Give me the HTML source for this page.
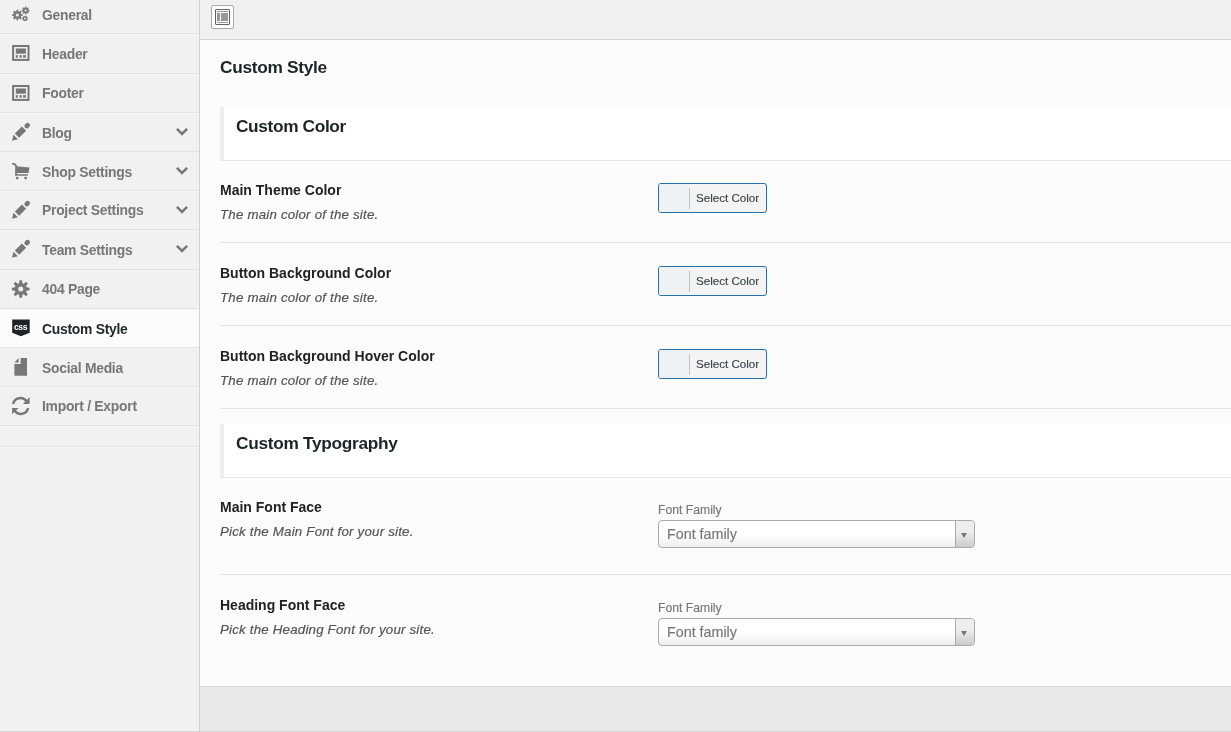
<!DOCTYPE html>
<html><head><meta charset="utf-8">
<style>
html,body{margin:0;padding:0;}
body{width:1231px;height:732px;overflow:hidden;position:relative;background:#efefef;font-family:"Liberation Sans",sans-serif;}
#wrap{position:absolute;left:0;top:0;width:1231px;height:732px;overflow:hidden;background:#efefef;will-change:transform;}
.t{position:absolute;white-space:nowrap;}
.ic{position:absolute;overflow:visible;}
#sb{position:absolute;left:0;top:0;width:199px;height:732px;background:#f1f1f1;}
.hl{position:absolute;left:0;width:199px;height:1px;background:#e2e2e2;border-bottom:1px solid #f5f5f5;}
#vl{position:absolute;left:199px;top:0;width:1px;height:732px;background:#d2d2d2;}
#hb{position:absolute;left:200px;top:0;width:1031px;height:38px;background:#f0f0f0;border-bottom:1px solid #f3f3f3;}
#hbl{position:absolute;left:200px;top:39px;width:1031px;height:1px;background:#d5d5d5;}
#hbtn{position:absolute;left:211px;top:5px;width:21px;height:22px;border:1px solid #a8a8a8;border-radius:2px;background:#fff;}
#hbi{position:absolute;left:3px;top:3px;width:13px;height:14px;border:1px solid #666;border-radius:1px;box-sizing:border-box;width:15px;height:16px;}
#hbi div{position:absolute;background:#999;}
#hbi .a{left:1px;top:1px;width:11px;height:1px;}
#hbi .b{left:1px;top:3px;width:3px;height:8px;}
#hbi .c{left:5px;top:3px;width:7px;height:8px;}
#hbi .d{left:1px;top:12px;width:11px;height:1px;}
#ct{position:absolute;left:200px;top:40px;width:1031px;height:646px;background:#fcfcfc;border-bottom:1px solid #dcdcdc;}
#ft{position:absolute;left:200px;top:687px;width:1031px;height:44px;background:#e9e9e9;}
.sec{position:absolute;left:220px;width:1007px;height:53px;background:#fff;border-left:4px solid #eeeeee;border-bottom:1px solid #e5e5e5;}
.rs{position:absolute;left:220px;width:1011px;height:1px;background:#e3e3e3;}
.cbtn{position:absolute;left:658px;width:107px;height:28px;border:1px solid #2271b1;border-radius:3px;background:#f4f4f4;}
.cbtn .sw{position:absolute;left:0;top:0;width:30px;height:28px;background:#f0f1f3;border-radius:2px 0 0 2px;}
.cbtn .sw:after{content:"";position:absolute;left:30px;top:4px;width:1px;height:21px;background:#c3c4c7;}
.sel{position:absolute;left:658px;width:315px;height:26px;border:1px solid #aaa;border-radius:4px;background:linear-gradient(to top,#eee 0%,#fff 50%);}
.arr{position:absolute;right:0;top:0;width:18px;height:26px;border-left:1px solid #aaa;border-radius:0 4px 4px 0;background:linear-gradient(to top,#ccc 0%,#eee 60%);}
.tri{position:absolute;left:5px;top:11.5px;width:0;height:0;border-left:3px solid transparent;border-right:3px solid transparent;border-top:5px solid #777;}
</style></head><body>
<div id="wrap">
<div id="sb"></div>
<div style="position:absolute;left:0;top:309px;width:199px;height:38px;background:#fcfcfc"></div>
<div class="hl" style="top:33px"></div>
<div class="hl" style="top:73px"></div>
<div class="hl" style="top:112px"></div>
<div class="hl" style="top:151px"></div>
<div class="hl" style="top:190px"></div>
<div class="hl" style="top:229px"></div>
<div class="hl" style="top:269px"></div>
<div class="hl" style="top:308px"></div>
<div class="hl" style="top:347px"></div>
<div class="hl" style="top:386px"></div>
<div class="hl" style="top:425px"></div>
<div class="hl" style="top:446px"></div>
<div class="t" style="left:42px;top:8.73px;font-size:13.9px;line-height:13.9px;color:#777;font-weight:bold;font-style:normal;letter-spacing:-0.27px;">General</div>

<div class="t" style="left:42px;top:47.73px;font-size:13.9px;line-height:13.9px;color:#777;font-weight:bold;font-style:normal;letter-spacing:-0.27px;">Header</div>

<div class="t" style="left:42px;top:86.73px;font-size:13.9px;line-height:13.9px;color:#777;font-weight:bold;font-style:normal;letter-spacing:-0.27px;">Footer</div>

<div class="t" style="left:42px;top:126.73px;font-size:13.9px;line-height:13.9px;color:#777;font-weight:bold;font-style:normal;letter-spacing:-0.27px;">Blog</div>

<div class="t" style="left:42px;top:165.73px;font-size:13.9px;line-height:13.9px;color:#777;font-weight:bold;font-style:normal;letter-spacing:-0.27px;">Shop Settings</div>

<div class="t" style="left:42px;top:203.73px;font-size:13.9px;line-height:13.9px;color:#777;font-weight:bold;font-style:normal;letter-spacing:-0.27px;">Project Settings</div>

<div class="t" style="left:42px;top:243.73px;font-size:13.9px;line-height:13.9px;color:#777;font-weight:bold;font-style:normal;letter-spacing:-0.27px;">Team Settings</div>

<div class="t" style="left:42px;top:282.73px;font-size:13.9px;line-height:13.9px;color:#777;font-weight:bold;font-style:normal;letter-spacing:-0.27px;">404 Page</div>

<div class="t" style="left:42px;top:322.73px;font-size:13.9px;line-height:13.9px;color:#23282d;font-weight:bold;font-style:normal;letter-spacing:-0.27px;">Custom Style</div>

<div class="t" style="left:42px;top:361.73px;font-size:13.9px;line-height:13.9px;color:#777;font-weight:bold;font-style:normal;letter-spacing:-0.27px;">Social Media</div>

<div class="t" style="left:42px;top:399.73px;font-size:13.9px;line-height:13.9px;color:#777;font-weight:bold;font-style:normal;letter-spacing:-0.27px;">Import / Export</div>

<svg class="ic" style="left:0;top:112px" width="199" height="40"><polyline points="176.9,16.9 182,22.0 187.1,16.9" fill="none" stroke="#777" stroke-width="2.5"/></svg>
<svg class="ic" style="left:0;top:151px" width="199" height="40"><polyline points="176.9,16.9 182,22.0 187.1,16.9" fill="none" stroke="#777" stroke-width="2.5"/></svg>
<svg class="ic" style="left:0;top:190px" width="199" height="40"><polyline points="176.9,16.9 182,22.0 187.1,16.9" fill="none" stroke="#777" stroke-width="2.5"/></svg>
<svg class="ic" style="left:0;top:229px" width="199" height="40"><polyline points="176.9,16.9 182,22.0 187.1,16.9" fill="none" stroke="#777" stroke-width="2.5"/></svg>
<svg class="ic" style="left:0;top:-6px" width="40" height="40"><circle cx="17.4" cy="21" r="3.8" fill="#777"/><rect x="16.50" y="15.70" width="1.8" height="5.30" fill="#777" transform="rotate(0.0 17.4 21)"/><rect x="16.50" y="15.70" width="1.8" height="5.30" fill="#777" transform="rotate(45.0 17.4 21)"/><rect x="16.50" y="15.70" width="1.8" height="5.30" fill="#777" transform="rotate(90.0 17.4 21)"/><rect x="16.50" y="15.70" width="1.8" height="5.30" fill="#777" transform="rotate(135.0 17.4 21)"/><rect x="16.50" y="15.70" width="1.8" height="5.30" fill="#777" transform="rotate(180.0 17.4 21)"/><rect x="16.50" y="15.70" width="1.8" height="5.30" fill="#777" transform="rotate(225.0 17.4 21)"/><rect x="16.50" y="15.70" width="1.8" height="5.30" fill="#777" transform="rotate(270.0 17.4 21)"/><rect x="16.50" y="15.70" width="1.8" height="5.30" fill="#777" transform="rotate(315.0 17.4 21)"/><circle cx="17.4" cy="21" r="1.5" fill="#f1f1f1"/><circle cx="25.6" cy="16.5" r="2.8" fill="#777"/><rect x="24.85" y="12.60" width="1.5" height="3.90" fill="#777" transform="rotate(0.0 25.6 16.5)"/><rect x="24.85" y="12.60" width="1.5" height="3.90" fill="#777" transform="rotate(45.0 25.6 16.5)"/><rect x="24.85" y="12.60" width="1.5" height="3.90" fill="#777" transform="rotate(90.0 25.6 16.5)"/><rect x="24.85" y="12.60" width="1.5" height="3.90" fill="#777" transform="rotate(135.0 25.6 16.5)"/><rect x="24.85" y="12.60" width="1.5" height="3.90" fill="#777" transform="rotate(180.0 25.6 16.5)"/><rect x="24.85" y="12.60" width="1.5" height="3.90" fill="#777" transform="rotate(225.0 25.6 16.5)"/><rect x="24.85" y="12.60" width="1.5" height="3.90" fill="#777" transform="rotate(270.0 25.6 16.5)"/><rect x="24.85" y="12.60" width="1.5" height="3.90" fill="#777" transform="rotate(315.0 25.6 16.5)"/><circle cx="25.6" cy="16.5" r="1.1" fill="#f1f1f1"/><circle cx="25.0" cy="24.5" r="2.35" fill="#777"/><rect x="24.50" y="21.60" width="1.0" height="2.90" fill="#777" transform="rotate(22.5 25.0 24.5)"/><rect x="24.50" y="21.60" width="1.0" height="2.90" fill="#777" transform="rotate(67.5 25.0 24.5)"/><rect x="24.50" y="21.60" width="1.0" height="2.90" fill="#777" transform="rotate(112.5 25.0 24.5)"/><rect x="24.50" y="21.60" width="1.0" height="2.90" fill="#777" transform="rotate(157.5 25.0 24.5)"/><rect x="24.50" y="21.60" width="1.0" height="2.90" fill="#777" transform="rotate(202.5 25.0 24.5)"/><rect x="24.50" y="21.60" width="1.0" height="2.90" fill="#777" transform="rotate(247.5 25.0 24.5)"/><rect x="24.50" y="21.60" width="1.0" height="2.90" fill="#777" transform="rotate(292.5 25.0 24.5)"/><rect x="24.50" y="21.60" width="1.0" height="2.90" fill="#777" transform="rotate(337.5 25.0 24.5)"/><circle cx="25.0" cy="24.5" r="0.9" fill="#f1f1f1"/></svg>
<svg class="ic" style="left:0;top:33px" width="40" height="40"><rect x="13.1" y="13" width="15.4" height="13.9" fill="none" stroke="#777" stroke-width="2"/><rect x="15.8" y="15.5" width="10.1" height="5.2" fill="#777"/><rect x="15.8" y="22.1" width="2.1" height="2.6" fill="#777"/><rect x="19.5" y="22.1" width="2.3" height="2.6" fill="#777"/><rect x="23.1" y="22.1" width="2.8" height="2.6" fill="#777"/></svg>
<svg class="ic" style="left:0;top:73px" width="40" height="40"><rect x="13.1" y="13" width="15.4" height="13.9" fill="none" stroke="#777" stroke-width="2"/><rect x="15.8" y="15.5" width="10.1" height="5.2" fill="#777"/><rect x="15.8" y="22.1" width="2.1" height="2.6" fill="#777"/><rect x="19.5" y="22.1" width="2.3" height="2.6" fill="#777"/><rect x="23.1" y="22.1" width="2.8" height="2.6" fill="#777"/></svg>
<svg class="ic" style="left:0;top:112px" width="40" height="40"><g transform="translate(12,28.8) rotate(-45)"><polygon points="0,0 5.3,-3.2 5.3,3.0" fill="#777"/><rect x="7.2" y="-3.1" width="9.9" height="6" fill="#777"/><rect x="18.6" y="-2.4" width="5.8" height="4.8" rx="2.3" fill="#777"/></g></svg>
<svg class="ic" style="left:0;top:190px" width="40" height="40"><g transform="translate(12,28.8) rotate(-45)"><polygon points="0,0 5.3,-3.2 5.3,3.0" fill="#777"/><rect x="7.2" y="-3.1" width="9.9" height="6" fill="#777"/><rect x="18.6" y="-2.4" width="5.8" height="4.8" rx="2.3" fill="#777"/></g></svg>
<svg class="ic" style="left:0;top:229px" width="40" height="40"><g transform="translate(12,28.8) rotate(-45)"><polygon points="0,0 5.3,-3.2 5.3,3.0" fill="#777"/><rect x="7.2" y="-3.1" width="9.9" height="6" fill="#777"/><rect x="18.6" y="-2.4" width="5.8" height="4.8" rx="2.3" fill="#777"/></g></svg>
<svg class="ic" style="left:0;top:151px" width="40" height="40"><path d="M12.9,12.6 C14.8,13.0 15.7,13.5 16,14.9" fill="none" stroke="#777" stroke-width="1.8" stroke-linecap="round"/><path d="M15.2,14.5 L16.9,14.5 L16.9,23.3 L27.9,23.3 L27.9,24.7 L15.1,24.7 Z" fill="#777"/><path d="M16.5,15.3 L29.4,16.4 L28.6,21.9 L16.5,21.9 Z" fill="#777"/><circle cx="17.2" cy="27.1" r="1.4" fill="#777"/><circle cx="25.6" cy="27.1" r="1.4" fill="#777"/></svg>
<svg class="ic" style="left:0;top:269px" width="40" height="40"><path d="M19.07,14.14 L19.45,11.19 L22.05,11.19 L22.43,14.14 L23.71,14.67 L26.06,12.86 L27.89,14.69 L26.08,17.04 L26.61,18.32 L29.56,18.70 L29.56,21.30 L26.61,21.68 L26.08,22.96 L27.89,25.31 L26.06,27.14 L23.71,25.33 L22.43,25.86 L22.05,28.81 L19.45,28.81 L19.07,25.86 L17.79,25.33 L15.44,27.14 L13.61,25.31 L15.42,22.96 L14.89,21.68 L11.94,21.30 L11.94,18.70 L14.89,18.32 L15.42,17.04 L13.61,14.69 L15.44,12.86 L17.79,14.67 Z M23.25,20.00 A2.5,2.5 0 1 0 18.25,20.00 A2.5,2.5 0 1 0 23.25,20.00 Z" fill="#777" fill-rule="evenodd"/></svg>
<svg class="ic" style="left:0;top:308px" width="40" height="40"><path d="M12.2,11.4 L29.7,11.4 L29.7,24.7 L20.95,28.3 L12.2,24.7 Z" fill="#1d2327"/><text x="20.5" y="21.6" text-anchor="middle" font-family="Liberation Sans" font-weight="bold" font-size="8.6" fill="#fff" letter-spacing="-0.4">css</text></svg>
<svg class="ic" style="left:0;top:347px" width="40" height="40"><path d="M20.6,11.1 L27,11.1 L27,28.7 L14.4,28.7 L14.4,17.1 L20.6,17.1 Z" fill="#777"/><path d="M14.4,15.5 L18.6,11.1 L18.6,15.5 Z" fill="#777"/></svg>
<svg class="ic" style="left:0;top:386px" width="40" height="40"><path d="M13.1,18 A7.5,7.5 0 0 1 26.5,15.2" fill="none" stroke="#777" stroke-width="2.4"/><path d="M22.9,18 L29.65,11.1 L29.65,18 Z" fill="#777"/><path d="M28.1,21.9 A7.5,7.5 0 0 1 14.7,24.8" fill="none" stroke="#777" stroke-width="2.4"/><path d="M12.1,21.9 L18.6,21.9 L12.1,28.3 Z" fill="#777"/></svg>
<div id="vl"></div>
<div id="hb"></div><div id="hbl"></div>
<div id="hbtn"><div id="hbi"><div class="a"></div><div class="b"></div><div class="c"></div><div class="d"></div></div></div>
<div id="ct"></div>
<div class="t" style="left:220px;top:58.66px;font-size:17.3px;line-height:17.3px;color:#1d2327;font-weight:bold;font-style:normal;letter-spacing:-0.3px;">Custom Style</div>

<div class="sec" style="top:107px"></div>
<div class="sec" style="top:424px"></div>
<div class="t" style="left:236px;top:117.96px;font-size:17.3px;line-height:17.3px;color:#1d2327;font-weight:bold;font-style:normal;letter-spacing:-0.36px;">Custom Color</div>

<div class="t" style="left:236px;top:434.86px;font-size:17.3px;line-height:17.3px;color:#1d2327;font-weight:bold;font-style:normal;letter-spacing:-0.3px;">Custom Typography</div>

<div class="rs" style="top:242px"></div>
<div class="rs" style="top:325px"></div>
<div class="rs" style="top:408px"></div>
<div class="rs" style="top:574px"></div>
<div class="t" style="left:220px;top:183.35px;font-size:14px;line-height:14px;color:#222;font-weight:bold;font-style:normal;">Main Theme Color</div>

<div class="t" style="left:220px;top:207.94px;font-size:13.3px;line-height:13.3px;color:#555;font-weight:normal;font-style:italic;letter-spacing:0.2px;-webkit-text-stroke:0.2px #555;">The main color of the site.</div>

<div class="cbtn" style="top:183px"><div class="sw"></div></div>
<div class="t" style="left:696px;top:192.38px;font-size:11.6px;line-height:11.6px;color:#3c434a;font-weight:normal;font-style:normal;-webkit-text-stroke:0.15px #3c434a;">Select Color</div>

<div class="t" style="left:220px;top:266.35px;font-size:14px;line-height:14px;color:#222;font-weight:bold;font-style:normal;">Button Background Color</div>

<div class="t" style="left:220px;top:290.94px;font-size:13.3px;line-height:13.3px;color:#555;font-weight:normal;font-style:italic;letter-spacing:0.2px;-webkit-text-stroke:0.2px #555;">The main color of the site.</div>

<div class="cbtn" style="top:266px"><div class="sw"></div></div>
<div class="t" style="left:696px;top:275.38px;font-size:11.6px;line-height:11.6px;color:#3c434a;font-weight:normal;font-style:normal;-webkit-text-stroke:0.15px #3c434a;">Select Color</div>

<div class="t" style="left:220px;top:349.35px;font-size:14px;line-height:14px;color:#222;font-weight:bold;font-style:normal;">Button Background Hover Color</div>

<div class="t" style="left:220px;top:373.94px;font-size:13.3px;line-height:13.3px;color:#555;font-weight:normal;font-style:italic;letter-spacing:0.2px;-webkit-text-stroke:0.2px #555;">The main color of the site.</div>

<div class="cbtn" style="top:349px"><div class="sw"></div></div>
<div class="t" style="left:696px;top:358.38px;font-size:11.6px;line-height:11.6px;color:#3c434a;font-weight:normal;font-style:normal;-webkit-text-stroke:0.15px #3c434a;">Select Color</div>

<div class="t" style="left:220px;top:500.15px;font-size:14px;line-height:14px;color:#222;font-weight:bold;font-style:normal;">Main Font Face</div>

<div class="t" style="left:220px;top:525.14px;font-size:13.3px;line-height:13.3px;color:#555;font-weight:normal;font-style:italic;letter-spacing:0.2px;-webkit-text-stroke:0.2px #555;">Pick the Main Font for your site.</div>

<div class="t" style="left:658px;top:503.57px;font-size:12.2px;line-height:12.2px;color:#777;font-weight:normal;font-style:normal;-webkit-text-stroke:0.15px #777;">Font Family</div>

<div class="sel" style="top:520px"><div class="arr"><div class="tri"></div></div></div>
<div class="t" style="left:667px;top:526.60px;font-size:14.3px;line-height:14.3px;color:#777;font-weight:normal;font-style:normal;-webkit-text-stroke:0.15px #777;">Font family</div>

<div class="t" style="left:220px;top:598.15px;font-size:14px;line-height:14px;color:#222;font-weight:bold;font-style:normal;">Heading Font Face</div>

<div class="t" style="left:220px;top:623.14px;font-size:13.3px;line-height:13.3px;color:#555;font-weight:normal;font-style:italic;letter-spacing:0.2px;-webkit-text-stroke:0.2px #555;">Pick the Heading Font for your site.</div>

<div class="t" style="left:658px;top:601.57px;font-size:12.2px;line-height:12.2px;color:#777;font-weight:normal;font-style:normal;-webkit-text-stroke:0.15px #777;">Font Family</div>

<div class="sel" style="top:618px"><div class="arr"><div class="tri"></div></div></div>
<div class="t" style="left:667px;top:624.60px;font-size:14.3px;line-height:14.3px;color:#777;font-weight:normal;font-style:normal;-webkit-text-stroke:0.15px #777;">Font family</div>

<div id="ft"></div>
<div style="position:absolute;left:0;top:731px;width:1231px;height:1px;background:#d8d8d8"></div>
</div></body></html>
